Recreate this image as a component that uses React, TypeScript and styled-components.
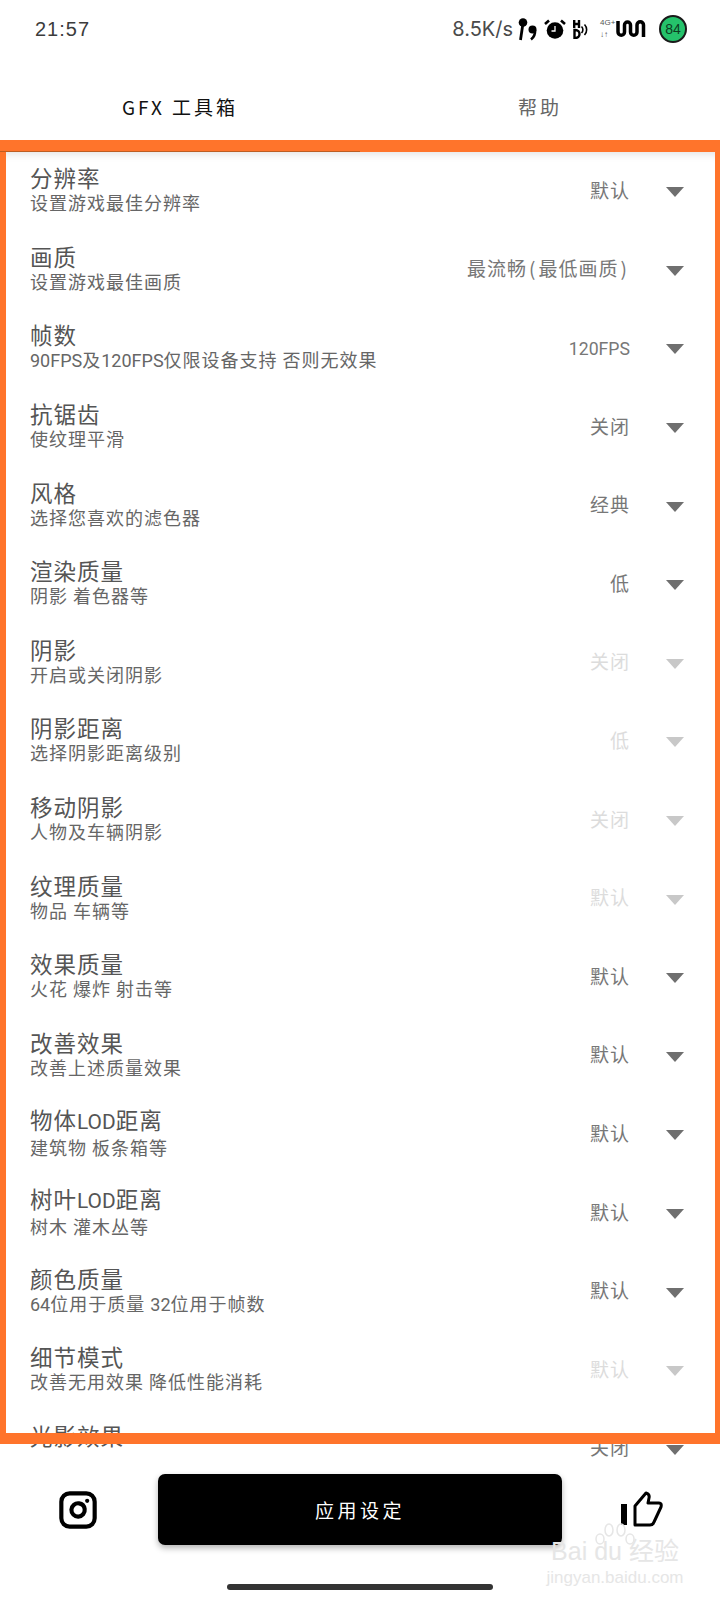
import React from 'react';
import styled, { createGlobalStyle } from 'styled-components';
import { Instagram } from 'lucide-react';

const GlobalStyle = createGlobalStyle`
  html, body {
    margin: 0;
    padding: 0;
    background: #ffffff;
  }
  body {
    font-family: "Noto Sans CJK SC", "Liberation Sans", sans-serif;
  }
`;

type Setting = { title: string; desc: string; value: string; disabled?: boolean };

const settings: Setting[] = [
  { title: '分辨率', desc: '设置游戏最佳分辨率', value: '默认' },
  { title: '画质', desc: '设置游戏最佳画质', value: '最流畅(最低画质)' },
  { title: '帧数', desc: '90FPS及120FPS仅限设备支持 否则无效果', value: '120FPS' },
  { title: '抗锯齿', desc: '使纹理平滑', value: '关闭' },
  { title: '风格', desc: '选择您喜欢的滤色器', value: '经典' },
  { title: '渲染质量', desc: '阴影 着色器等', value: '低' },
  { title: '阴影', desc: '开启或关闭阴影', value: '关闭', disabled: true },
  { title: '阴影距离', desc: '选择阴影距离级别', value: '低', disabled: true },
  { title: '移动阴影', desc: '人物及车辆阴影', value: '关闭', disabled: true },
  { title: '纹理质量', desc: '物品 车辆等', value: '默认', disabled: true },
  { title: '效果质量', desc: '火花 爆炸 射击等', value: '默认' },
  { title: '改善效果', desc: '改善上述质量效果', value: '默认' },
  { title: '物体LOD距离', desc: '建筑物 板条箱等', value: '默认' },
  { title: '树叶LOD距离', desc: '树木 灌木丛等', value: '默认' },
  { title: '颜色质量', desc: '64位用于质量 32位用于帧数', value: '默认' },
  { title: '细节模式', desc: '改善无用效果 降低性能消耗', value: '默认', disabled: true },
  { title: '光影效果', desc: '', value: '关闭' },
];

const Latin = styled.span`
  font-family: Roboto, sans-serif;
  letter-spacing: 0;
`;

const Paren = styled.span`
  margin: 0 2px;
`;

// latin runs are narrower than the CJK text around them
function mixed(text: string) {
  return text.split(/([A-Za-z0-9]+|[()])/).map((part, i) => {
    if (i % 2 === 0) return part;
    return part === '(' || part === ')' ? <Paren key={i}>{part}</Paren> : <Latin key={i}>{part}</Latin>;
  });
}

export default function App() {
  return (
    <Screen>
      <GlobalStyle />
      <StatusBar>
        <Clock>21:57</Clock>
        <StatusIcons>
          <Speed>8.5K/s</Speed>
          <EarbudIcon width="20" height="23" viewBox="0 0 20 23">
            <circle cx="6" cy="4.500" r="4.300" fill="#000" />
            <path d="M6 5 L3.500 22" stroke="#000" strokeWidth="2.800" />
            <circle cx="15.500" cy="11.500" r="4" fill="#000" />
            <path d="M18 12 Q18.500 18 14 21.500" stroke="#000" strokeWidth="2.600" fill="none" />
          </EarbudIcon>
          <AlarmIcon width="22" height="20" viewBox="0 0 22 20">
            <circle cx="11" cy="11.500" r="8.300" fill="#000" />
            <path d="M11 7v5H7.500" stroke="#fff" strokeWidth="1.300" fill="none" />
            <path d="M1 5 L5 1.500 M21 5 L17 1.500" stroke="#000" strokeWidth="2.600" />
          </AlarmIcon>
          <HdIcon width="15" height="19" viewBox="0 0 15 19">
            <path d="M1.200 0v8M6 0v8M1.200 4H6" stroke="#000" strokeWidth="2.400" fill="none" />
            <path d="M1.500 10v8h1a4 4 0 0 0 0-8z" stroke="#000" strokeWidth="2.400" fill="none" />
            <path d="M8.500 6.500a4.500 4.500 0 0 1 0 6.500M11.500 4.500a7.500 7.500 0 0 1 0 10.500" stroke="#000" strokeWidth="1.600" fill="none" />
          </HdIcon>
          <NetworkLabel>
            4G+
            <br />
            ↓↑
          </NetworkLabel>
          <svg width="30" height="18" viewBox="0 0 30 18">
            <path
              d="M2 1v11a3 3 0 0 0 6.500 0V5a3 3 0 0 1 6 0v7a3 3 0 0 0 6.500 0V5a3 3 0 0 1 6.500 0v12"
              stroke="#000"
              strokeWidth="3.500"
              fill="none"
            />
          </svg>
          <Battery>84</Battery>
        </StatusIcons>
      </StatusBar>
      <Tabs>
        <Tab $active>GFX 工具箱</Tab>
        <Tab>帮助</Tab>
      </Tabs>
      <ListViewport>
        {settings.map((item) => (
          <Row key={item.title}>
            <RowText>
              <RowTitle>{mixed(item.title)}</RowTitle>
              <RowDesc>{mixed(item.desc)}</RowDesc>
            </RowText>
            <RowValue $disabled={item.disabled}>{mixed(item.value)}</RowValue>
            <Caret $disabled={item.disabled} />
          </Row>
        ))}
      </ListViewport>
      <Highlight>
        <TabIndicator />
      </Highlight>
      <BottomBar>
        <IconSlot>
          <Instagram size={40} strokeWidth={2.5} color="#000" />
        </IconSlot>
        <ApplyButton>应用设定</ApplyButton>
        <IconSlot>
          <svg width="42" height="37" viewBox="0 0 42 37">
            <rect x="0" y="13" width="6" height="21" fill="#000" />
            <path
              d="M14 34 V15 L25 2 Q29 3 28 7 L27 12 H38 Q41 12 40 16 L33 31 Q32 34 29 34 Z"
              stroke="#000"
              strokeWidth="3"
              fill="none"
              strokeLinejoin="round"
            />
          </svg>
        </IconSlot>
      </BottomBar>
      <HomeIndicator />
      <Watermark>
        <svg width="44" height="26" viewBox="0 0 44 26">
          <g fill="none" stroke="#e6e6e6" strokeWidth="1.500">
            <ellipse cx="7" cy="17" rx="4" ry="5" />
            <ellipse cx="16" cy="8" rx="4" ry="6" />
            <ellipse cx="28" cy="8" rx="4" ry="6" />
            <ellipse cx="37" cy="17" rx="4" ry="5" />
          </g>
        </svg>
        <WatermarkBrand>Bai du 经验</WatermarkBrand>
        <WatermarkUrl>jingyan.baidu.com</WatermarkUrl>
      </Watermark>
    </Screen>
  );
}

const Screen = styled.div`
  position: relative;
  width: 720px;
  height: 1600px;
  overflow: hidden;
  background: #ffffff;
  display: flex;
  flex-direction: column;
`;

const StatusBar = styled.div`
  height: 58px;
  padding: 0 33px 0 35px;
  display: flex;
  align-items: center;
  justify-content: space-between;
`;

const Clock = styled.span`
  font-family: "Liberation Sans", sans-serif;
  font-size: 20px;
  letter-spacing: 1px;
  color: #3c3c3c;
`;

const StatusIcons = styled.div`
  display: flex;
  align-items: center;
`;

const Speed = styled.span`
  font-family: Inter, sans-serif;
  font-size: 20px;
  color: #4a4a4a;
`;

const EarbudIcon = styled.svg`
  margin-left: 4px;
`;

const AlarmIcon = styled.svg`
  margin-left: 7px;
`;

const HdIcon = styled.svg`
  margin-left: 7px;
`;

const NetworkLabel = styled.span`
  font-family: "Liberation Sans", sans-serif;
  font-size: 8px;
  line-height: 12px;
  color: #555555;
  width: 16px;
  margin-left: 12px;
`;

const Battery = styled.div`
  width: 24px;
  height: 24px;
  margin-left: 13px;
  border: 2px solid #1a1a1a;
  border-radius: 50%;
  background: #25c26b;
  color: #0d3d22;
  font-family: "Liberation Sans", sans-serif;
  font-size: 14px;
  display: flex;
  align-items: center;
  justify-content: center;
`;

const Tabs = styled.div`
  height: 82px;
  display: flex;
`;

const Tab = styled.div<{ $active?: boolean }>`
  flex: 1;
  display: flex;
  align-items: center;
  justify-content: center;
  padding-top: 14px;
  font-size: 19px;
  letter-spacing: 3px;
  color: ${(p) => (p.$active ? '#111111' : '#666666')};
`;

const ListViewport = styled.div`
  height: 1322px;
  overflow: hidden;
`;

const Row = styled.div`
  height: 78.6px;
  padding: 20px 36px 0 30px;
  box-sizing: border-box;
  display: flex;
  align-items: center;
`;

const RowText = styled.div`
  flex: 1;
  min-width: 0;
`;

const RowTitle = styled.div`
  font-size: 22.5px;
  letter-spacing: 1px;
  line-height: 27px;
  color: #555555;

  ${Latin} {
    font-size: 0.93em;
  }
`;

const RowDesc = styled.div`
  font-size: 18px;
  letter-spacing: 1px;
  line-height: 23px;
  height: 23px;
  color: #666666;
`;

const RowValue = styled.div<{ $disabled?: boolean }>`
  font-size: 19px;
  letter-spacing: 1px;
  color: ${(p) => (p.$disabled ? '#dcdcdc' : '#777777')};

  ${Latin} {
    font-size: 0.93em;
  }
`;

const Caret = styled.div<{ $disabled?: boolean }>`
  width: 0;
  height: 0;
  margin: 6px 0 0 36px;
  border-left: 9px solid transparent;
  border-right: 9px solid transparent;
  border-top: 10px solid ${(p) => (p.$disabled ? '#c8c8c8' : '#6f6f6f')};
`;

const Highlight = styled.div`
  position: absolute;
  top: 140px;
  left: 0;
  width: 720px;
  height: 1304px;
  box-sizing: border-box;
  border-style: solid;
  border-color: #ff742b;
  border-width: 12px 5px 11px 6px;
  box-shadow: inset 0 9px 8px -7px rgba(0, 0, 0, 0.12);
  pointer-events: none;
`;

const TabIndicator = styled.div`
  position: absolute;
  top: -1px;
  left: -6px;
  width: 360px;
  height: 1px;
  background: #bd5d22;
`;

const BottomBar = styled.div`
  height: 124px;
  padding: 0 28px;
  display: flex;
  align-items: flex-start;
  justify-content: space-between;
`;

const IconSlot = styled.div`
  width: 100px;
  height: 71px;
  margin-top: 12px;
  display: flex;
  align-items: center;
  justify-content: center;
`;

const ApplyButton = styled.button`
  width: 404px;
  height: 71px;
  margin-top: 12px;
  border: none;
  border-radius: 7px;
  background: #000000;
  box-shadow: 0 3px 6px rgba(0, 0, 0, 0.3);
  color: #ffffff;
  font-family: inherit;
  font-size: 19px;
  letter-spacing: 3.5px;
`;

const HomeIndicator = styled.div`
  position: absolute;
  left: 227px;
  bottom: 10px;
  width: 266px;
  height: 6px;
  border-radius: 3px;
  background: #333333;
`;

const Watermark = styled.div`
  position: absolute;
  left: 550px;
  top: 1522px;
  width: 130px;
  display: flex;
  flex-direction: column;
  align-items: center;
  color: #e6e6e6;
  pointer-events: none;
`;

const WatermarkBrand = styled.div`
  margin-top: -10px;
  font-family: "Liberation Sans", "Noto Sans CJK SC", sans-serif;
  font-size: 25px;
  line-height: 26px;
  white-space: nowrap;
`;

const WatermarkUrl = styled.div`
  margin-top: 4px;
  font-family: "Liberation Sans", sans-serif;
  font-size: 17px;
  line-height: 20px;
  white-space: nowrap;
`;
